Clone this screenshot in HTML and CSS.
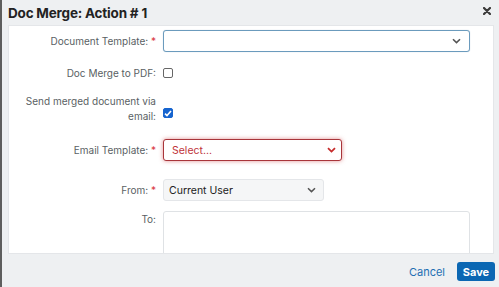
FILE: index.html
```html
<!DOCTYPE html>
<html lang="en">
<head>
  <meta charset="UTF-8"/>
  <title>Doc Merge: Action # 1</title>
  <link rel="stylesheet" href="styles.css">
</head>
<body>
<div class="dialog">
  <header class="dialog-header">
    <h1>Doc Merge: Action # 1</h1>
    <button class="close" aria-label="Close">
      <svg width="8" height="8" viewBox="0 0 8 8"><path d="M1 1L7 7M7 1L1 7" stroke="#3a3a3a" stroke-width="2.2" stroke-linecap="round"/></svg>
    </button>
  </header>

  <!-- Form body -->
  <div class="dialog-body">
    <div class="row row-first">
      <label class="label">Document Template: <span class="req">*</span></label>
      <div class="select select-focus select-wide">
        <span></span>
        <svg class="chev" width="9" height="6" viewBox="0 0 9 6"><path d="M1 1.2L4.5 4.6L8 1.2" fill="none" stroke="#555" stroke-width="1.6"/></svg>
      </div>
    </div>

    <div class="row row-check">
      <label class="label">Doc Merge to PDF:</label>
      <span class="checkbox"></span>
    </div>

    <div class="row row-check row-tall">
      <label class="label label-wrap">Send merged document via email:</label>
      <span class="checkbox checked">
        <svg width="8" height="7" viewBox="0 0 8 7"><path d="M1 3.6L3 5.6L7 1" fill="none" stroke="#fff" stroke-width="1.6"/></svg>
      </span>
    </div>

    <div class="row row-email">
      <label class="label">Email Template: <span class="req">*</span></label>
      <div class="select select-error">
        <span>Select...</span>
        <svg class="chev" width="9" height="6" viewBox="0 0 9 6"><path d="M1 1.2L4.5 4.6L8 1.2" fill="none" stroke="#c62b2b" stroke-width="1.8"/></svg>
      </div>
    </div>

    <div class="row row-from">
      <label class="label">From: <span class="req">*</span></label>
      <div class="select select-plain">
        <span>Current User</span>
        <svg class="chev" width="9" height="6" viewBox="0 0 9 6"><path d="M1 1.2L4.5 4.6L8 1.2" fill="none" stroke="#555" stroke-width="1.5"/></svg>
      </div>
    </div>

    <div class="row row-to">
      <label class="label label-top">To:</label>
      <div class="textarea"></div>
    </div>
  </div>

  <footer class="dialog-footer">
    <button class="btn-link">Cancel</button>
    <button class="btn-primary">Save</button>
  </footer>
</div>
</body>
</html>
```

FILE: styles.css
```css
:root{
  --bg:#eef0f2;
  --label:#5a5f64;
  --req:#d9363e;
  --blue:#0b67b3;
  --radius:3px;
}
*{margin:0;padding:0;box-sizing:border-box;font-family:Inter,"Liberation Sans",Arial,sans-serif}
html,body{width:499px;height:287px;overflow:hidden}
body{background:var(--bg)}

.dialog{height:287px;display:flex;flex-direction:column;border-left:2px solid #5e5e5e;background:var(--bg)}

/* Header */
.dialog-header{height:25px;flex:none;display:flex;align-items:center;justify-content:space-between;padding:0 8px 0 6px}
.dialog-header h1{font-size:13.5px;font-weight:700;color:#222;letter-spacing:-.2px}
.close{border:none;background:none;display:flex;width:9px;height:9px;align-items:center;justify-content:center;margin-top:-3px}

/* Body */
.dialog-body{flex:1;overflow:hidden;background:#fff;margin:0 5px 0 6px;border:1px solid #e4e6e9;padding-top:4px}
.row{display:flex;align-items:center;gap:7px}
.label{flex:none;width:147px;text-align:right;font-size:10px;line-height:15px;color:var(--label)}
.label-wrap{padding-left:14px}
.req{color:var(--req)}
.row-check{margin-top:10px;height:22px}
.row-tall{height:30px;align-items:flex-end}
.row-tall .checkbox{margin-bottom:6px}
.row-email{margin-top:15px}
.row-from{margin-top:18px}
.row-to{margin-top:10px;align-items:flex-start}
.label-top{margin-top:1px}

/* Selects */
.select{height:22px;display:flex;align-items:center;justify-content:space-between;border:1px solid #dcdfe3;border-radius:var(--radius);font-size:10.5px;color:#222;background:#fff}
.select-wide{width:307px;padding:0 8px 0 8px}
.select-focus{border-color:#6b9bbd;box-shadow:0 0 1px rgba(70,120,160,.4)}
.select-error{width:179px;padding:0 5px 0 8px;border-color:#a8353a;box-shadow:0 0 4px rgba(200,50,55,.55);color:#c0333a}
.select-plain{width:161px;padding:0 7px 0 5px;background:#f5f6f7;border-color:#e4e6e9}

/* Checkboxes */
.checkbox{width:10px;height:10px;flex:none;border:1px solid #666;border-radius:2px;display:flex;align-items:center;justify-content:center}
.checkbox.checked{background:#1664cf;border-color:#1664cf}

.textarea{width:307px;height:70px;border:1px solid #dfe2e5;border-radius:var(--radius)}

/* Footer */
.dialog-footer{height:33px;flex:none;display:flex;align-items:center;justify-content:flex-end;gap:12px;padding:2px 4px 0 0}
.btn-link{border:none;background:none;color:#1e6fb3;font-size:11px}
.btn-primary{border:none;background:var(--blue);color:#fff;font-size:11px;font-weight:700;width:38px;height:19px;border-radius:var(--radius)}
```
